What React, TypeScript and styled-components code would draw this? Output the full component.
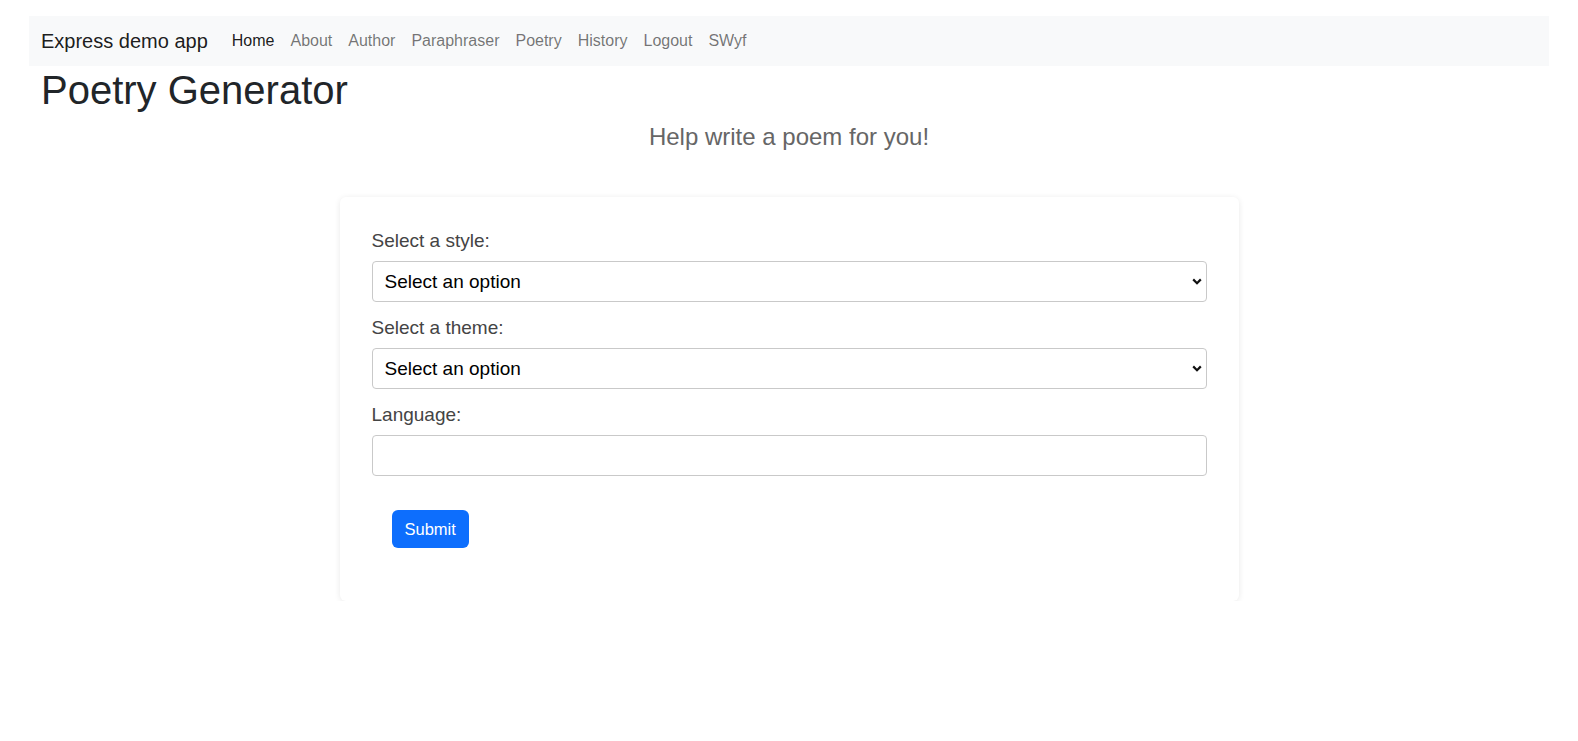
import styled, { createGlobalStyle } from 'styled-components'

const GlobalStyle = createGlobalStyle`
  html, body {
    margin: 0;
    padding: 0;
    background: #fff;
  }

  body {
    font-family: "Liberation Sans", Arial, sans-serif;
    color: #212529;
  }

  * {
    box-sizing: border-box;
  }
`

const Page = styled.div`
  padding: 16px 29px 0;
`

const NavBar = styled.nav`
  display: flex;
  align-items: center;
  height: 50px;
  padding: 0 12px;
  background-color: #f8f9fa;
`

const Brand = styled.a`
  font-size: 20px;
  color: rgba(0, 0, 0, 0.9);
  text-decoration: none;
  margin-right: 16px;
`

const NavList = styled.div`
  display: flex;
  align-items: center;
`

const NavLink = styled.a<{ $active?: boolean }>`
  font-size: 16px;
  padding: 8px;
  text-decoration: none;
  color: ${({ $active }) => ($active ? 'rgba(0, 0, 0, 0.9)' : 'rgba(0, 0, 0, 0.55)')};
`

const Title = styled.h1`
  margin: 0;
  padding-left: 12px;
  font-size: 40px;
  font-weight: 400;
  line-height: 48px;
  color: #212529;
`

const Subtitle = styled.p`
  margin: 8px 0 0;
  text-align: center;
  font-size: 24px;
  line-height: 29px;
  color: #666;
`

const Card = styled.form`
  width: 899px;
  margin: 46px auto 0;
  padding: 30px 32px 29px;
  background: #fff;
  border-radius: 6px;
  box-shadow: 0 1px 6px rgba(0, 0, 0, 0.09);
`

const Label = styled.label`
  display: block;
  font-size: 19px;
  line-height: 28px;
  margin-bottom: 6px;
  color: #444;
`

const SelectWrap = styled.div`
  position: relative;
  margin-bottom: 12px;
`

const Select = styled.select`
  display: block;
  width: 100%;
  height: 41px;
  padding: 0 30px 0 12px;
  font-family: "Liberation Sans", Arial, sans-serif;
  font-size: 19px;
  color: #000;
  background: #fff;
  border: 1px solid #c9c9c9;
  border-radius: 4px;
  appearance: none;
  outline: none;
`

const Chevron = styled.svg`
  position: absolute;
  right: 5px;
  top: 17px;
  width: 10px;
  height: 7px;
  pointer-events: none;
`

const Input = styled.input`
  display: block;
  width: 100%;
  height: 41px;
  padding: 0 12px;
  margin-bottom: 12px;
  font-family: "Liberation Sans", Arial, sans-serif;
  font-size: 19px;
  border: 1px solid #c9c9c9;
  border-radius: 4px;
  outline: none;
`

const ButtonRow = styled.div`
  padding: 22px 20px 24px;
`

const SubmitButton = styled.button`
  height: 38px;
  padding: 0 13px;
  font-family: "Liberation Sans", Arial, sans-serif;
  font-size: 16.5px;
  color: #fff;
  background-color: #0d6efd;
  border: none;
  border-radius: 6px;
  cursor: pointer;
`

const links = ['Home', 'About', 'Author', 'Paraphraser', 'Poetry', 'History', 'Logout', 'SWyf']

const Dropdown = ({ id }: { id: string }) => (
  <SelectWrap>
    <Select id={id} defaultValue="">
      <option value="">Select an option</option>
    </Select>
    <Chevron viewBox="0 0 10 7">
      <path d="M1.2 1.4 L5 5.2 L8.8 1.4" fill="none" stroke="#111" strokeWidth="2.2" />
    </Chevron>
  </SelectWrap>
)

const App = () => {
  return (
    <Page>
      <GlobalStyle />
      <NavBar>
        <Brand href="#">Express demo app</Brand>
        <NavList>
          {links.map((l, i) => (
            <NavLink key={l} href="#" $active={i === 0}>
              {l}
            </NavLink>
          ))}
        </NavList>
      </NavBar>
      <Title>Poetry Generator</Title>
      <Subtitle>Help write a poem for you!</Subtitle>
      <Card onSubmit={(e) => e.preventDefault()}>
        <Label htmlFor="style">Select a style:</Label>
        <Dropdown id="style" />
        <Label htmlFor="theme">Select a theme:</Label>
        <Dropdown id="theme" />
        <Label htmlFor="language">Language:</Label>
        <Input id="language" type="text" />
        <ButtonRow>
          <SubmitButton type="submit">Submit</SubmitButton>
        </ButtonRow>
      </Card>
    </Page>
  )
}

export default App
